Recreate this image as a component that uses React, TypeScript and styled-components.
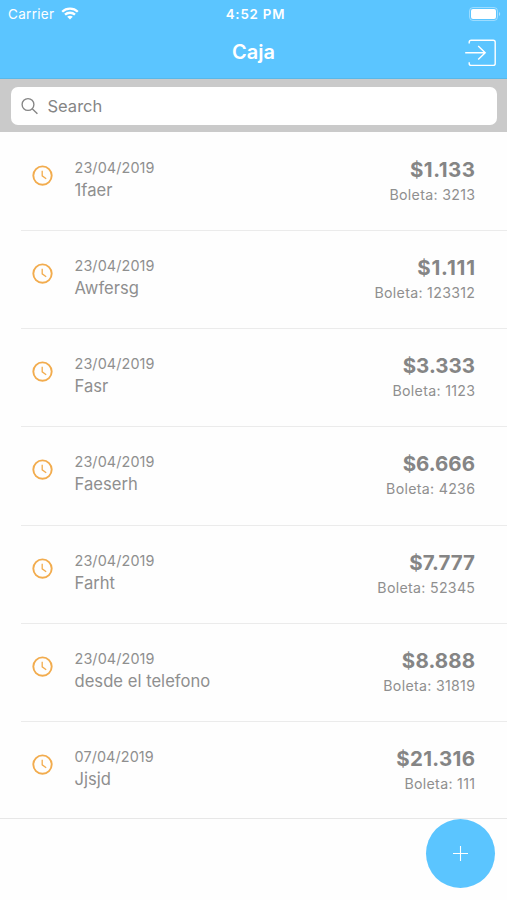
import React from "react";
import styled, { createGlobalStyle } from "styled-components";

const GlobalStyle = createGlobalStyle`
  * { box-sizing: border-box; }
  body {
    margin: 0;
    background: #fefefe;
    font-family: Inter, "Liberation Sans", sans-serif;
    color: #8f8f8f;
  }
`;

const Screen = styled.div`
  position: relative;
  width: 507px;
  height: 900px;
  overflow: hidden;
  background: #fefefe;
`;

const Header = styled.header`
  height: 79px;
  background: #5bc5ff;
  color: #fff;
  border-bottom: 1px solid #59b8e8;
`;

const StatusBar = styled.div`
  display: grid;
  grid-template-columns: 1fr auto 1fr;
  align-items: center;
  height: 27px;
  padding: 0 6px 0 8px;
`;

const Carrier = styled.div`
  display: flex;
  align-items: center;
  gap: 7px;
  font-size: 13.5px;
  letter-spacing: 0.3px;
`;

const Clock = styled.div`
  font-size: 13.3px;
  font-weight: 600;
  letter-spacing: 0.8px;
  margin-left: 2px;
`;

const Battery = styled.svg`
  justify-self: end;
  display: block;
`;

const NavBar = styled.div`
  display: grid;
  grid-template-columns: 1fr auto 1fr;
  align-items: center;
  height: 51px;
  padding-right: 10px;
`;

const Title = styled.h1`
  grid-column: 2;
  margin: -2px 0 0;
  padding-left: 10px;
  font-size: 20px;
  line-height: 24px;
  font-weight: 600;
`;

const NavButton = styled.button`
  justify-self: end;
  padding: 0;
  border: 0;
  background: none;
  color: inherit;
  svg { display: block; }
`;

const SearchBar = styled.div`
  height: 53px;
  padding: 8px 10px 7px 11px;
  background: #cacaca;
`;

const SearchField = styled.label`
  display: flex;
  align-items: center;
  gap: 8.5px;
  height: 38px;
  padding-left: 10px;
  border-radius: 7px;
  background: #fff;
`;

const SearchInput = styled.input`
  flex: 1;
  min-width: 0;
  padding: 0;
  border: 0;
  outline: 0;
  background: none;
  font: 400 16.5px Inter, sans-serif;
  &::placeholder { color: #858585; opacity: 1; }
`;

const List = styled.ul`
  margin: 0;
  padding: 0;
  list-style: none;
  height: 687px;
  border-bottom: 1px solid #e7e7e7;
`;

const Row = styled.li`
  display: flex;
  height: 98.14px;
  margin-left: 21px;
  padding: 26px 32px 0 11px;
  & + & { box-shadow: inset 0 1px 0 #ebebeb; }
`;

const StatusIcon = styled.svg`
  flex: none;
  margin: 7px 21.5px 0 0;
`;

const Details = styled.div`
  flex: 1;
`;

const DateText = styled.div`
  font-size: 14.4px;
  line-height: 20px;
  letter-spacing: 0.1px;
`;

const Name = styled.div`
  font-size: 16.6px;
  line-height: 24px;
  letter-spacing: 0.02px;
`;

const Totals = styled.div`
  text-align: right;
`;

const Amount = styled.div<{ $tracking: number }>`
  margin-right: -${(p) => p.$tracking}px;
  font-size: 20.5px;
  line-height: 24px;
  font-weight: 700;
  color: #858585;
  letter-spacing: ${(p) => p.$tracking}px;
`;

const Receipt = styled.div`
  margin-right: -0.3px;
  font-size: 14.2px;
  line-height: 26px;
  letter-spacing: 0.3px;
`;

const AddButton = styled.button`
  position: absolute;
  right: 12px;
  bottom: 12px;
  display: flex;
  align-items: center;
  justify-content: center;
  width: 69px;
  height: 69px;
  padding: 0;
  border: 0;
  border-radius: 50%;
  background: #5bc5ff;
`;

const entries = [
  { date: "23/04/2019", name: "1faer", amount: "$1.133", tracking: 0.5, receipt: "3213" },
  { date: "23/04/2019", name: "Awfersg", amount: "$1.111", tracking: 0.8, receipt: "123312" },
  { date: "23/04/2019", name: "Fasr", amount: "$3.333", tracking: 0, receipt: "1123" },
  { date: "23/04/2019", name: "Faeserh", amount: "$6.666", tracking: 0, receipt: "4236" },
  { date: "23/04/2019", name: "Farht", amount: "$7.777", tracking: 0, receipt: "52345" },
  { date: "23/04/2019", name: "desde el telefono", amount: "$8.888", tracking: 0.1, receipt: "31819" },
  { date: "07/04/2019", name: "Jjsjd", amount: "$21.316", tracking: 0.3, receipt: "111" },
];

export default function App() {
  return (
    <Screen>
      <GlobalStyle />
      <Header>
        <StatusBar>
          <Carrier>
            Carrier
            <svg width="18" height="13" viewBox="0 0 18 13" fill="none" stroke="#fff" strokeWidth="2.3">
              <path d="M1.2 4.7C5.5.5 12.5.5 16.8 4.7" />
              <path d="M4 7.7c2.8-2.6 7.2-2.6 10 0" />
              <path d="M9 12.6 6.2 9.8c1.5-1.5 4.1-1.5 5.6 0z" fill="#fff" stroke="none" />
            </svg>
          </Carrier>
          <Clock>4:52 PM</Clock>
          <Battery width="32" height="14" viewBox="0 0 32 14">
            <rect x="0.5" y="0.5" width="28" height="13" rx="3.5" fill="none" stroke="#fff" strokeOpacity="0.4" />
            <rect x="2" y="2" width="25" height="10" rx="2" fill="#fff" />
            <path d="M30 5c1.6.5 1.6 3.5 0 4z" fill="#fff" fillOpacity="0.5" />
          </Battery>
        </StatusBar>
        <NavBar>
          <Title>Caja</Title>
          <NavButton aria-label="Exit">
            <svg width="32" height="28" viewBox="0 0 32 28" fill="none" stroke="#fff" strokeWidth="1.4">
              <path d="M4.2 4.4V3.2Q4.2 1.2 6.2 1.2H28.2Q30.2 1.2 30.2 3.2V24.4Q30.2 26.4 28.2 26.4H6.2Q4.2 26.4 4.2 24.4V23.2" />
              <path d="M.2 13.8H20M13.2 7l7 6.8-7 6.8" />
            </svg>
          </NavButton>
        </NavBar>
      </Header>
      <SearchBar>
        <SearchField>
          <svg width="18" height="18" viewBox="0 0 18 18" fill="none" stroke="#858585" strokeWidth="1.35">
            <circle cx="7" cy="7.5" r="5.9" />
            <path d="m11.2 11.7 5.2 5.1" />
          </svg>
          <SearchInput placeholder="Search" aria-label="Search" />
        </SearchField>
      </SearchBar>
      <List>
        {entries.map((entry) => (
          <Row key={entry.receipt}>
            <StatusIcon width="21" height="21" viewBox="0 0 21 21" fill="none" stroke="#f2ac4e">
              <circle cx="10.5" cy="10.6" r="9.2" strokeWidth="1.9" />
              <path d="M10.2 5.7v5.2l4 2.8" strokeWidth="1.3" />
            </StatusIcon>
            <Details>
              <DateText>{entry.date}</DateText>
              <Name>{entry.name}</Name>
            </Details>
            <Totals>
              <Amount $tracking={entry.tracking}>{entry.amount}</Amount>
              <Receipt>Boleta: {entry.receipt}</Receipt>
            </Totals>
          </Row>
        ))}
      </List>
      <AddButton aria-label="Add">
        <svg width="15" height="15" viewBox="0 0 15 15" stroke="#fff" strokeWidth="1.1">
          <path d="M7.5 0v15M0 7.5h15" />
        </svg>
      </AddButton>
    </Screen>
  );
}
